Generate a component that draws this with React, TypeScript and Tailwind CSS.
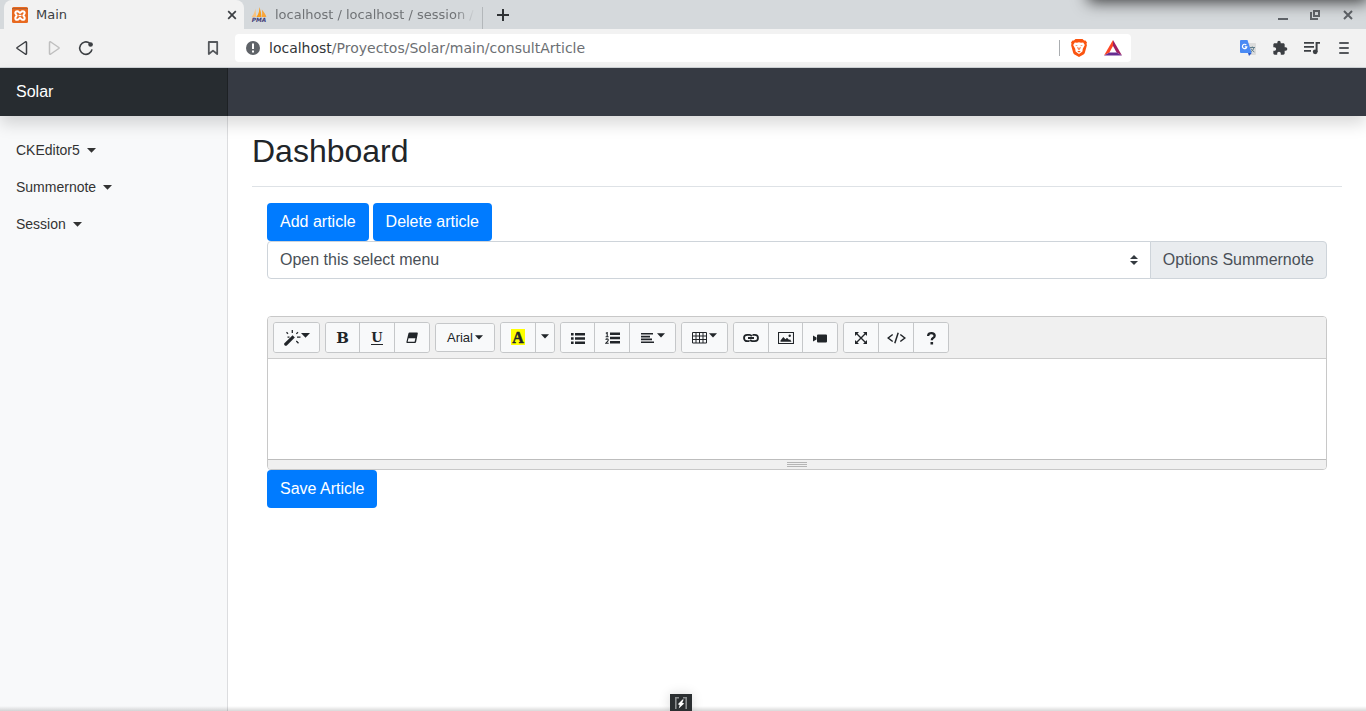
import React from "react";
import { MdExtension, MdQueueMusic } from "react-icons/md";

type KidsProps = { children: React.ReactNode };

function Caret({ className = "" }: { className?: string }) {
  return (
    <svg width="9" height="5" viewBox="0 0 9 5" fill="currentColor" aria-hidden="true" className={`shrink-0 ${className}`}>
      <path d="M0 0h9L4.500 4.800z" />
    </svg>
  );
}

/* ---------- browser window ---------- */

function PmaIcon() {
  return (
    <svg width="16" height="16" viewBox="0 0 16 16" aria-hidden="true">
      <path d="M0.5 10 C3 8 4 4 4.4 1.600 L5.200 10Z" fill="#f9c27c" />
      <path d="M5.400 10 C8 7 8.400 3 8.300 0 C9.600 3 10.400 7 10.400 10Z" fill="#f89c1c" />
      <path d="M10.800 10 C11.400 7 11.200 5 10.800 2.500 C13 5 15 8 15.400 10Z" fill="#f9a53a" />
      <text x="8" y="14.600" textAnchor="middle" fontSize="5.800" fontWeight="bold" fontStyle="italic" fill="#3f3e78" fontFamily="DejaVu Sans, sans-serif">
        PMA
      </text>
    </svg>
  );
}

function TabStrip() {
  return (
    <div className="flex h-[29px] items-stretch bg-[#d5d9dc] pl-1 font-['DejaVu_Sans',sans-serif] text-[13px]">
      <div className="flex w-60 items-center rounded-t-lg bg-[#f2f2f2] pl-2 pr-1 text-[#3c3f43]">
        <svg width="16" height="16" viewBox="0 0 16 16" aria-hidden="true">
          <rect width="16" height="16" rx="1.500" fill="#e8691f" />
          <path d="M0 1.500h16" stroke="#b9602f" strokeWidth="1" />
          <path
            d="M5.300 4.200c1.600 0 1.700 1.700 2.700 1.700s1.100-1.700 2.700-1.700c1.200 0 2 .8 2 1.900 0 1.200-1.400 1.500-1.400 2.400s1.400 1.200 1.400 2.400c0 1.100-.8 1.900-2 1.900-1.600 0-1.700-1.700-2.700-1.700s-1.100 1.700-2.700 1.700c-1.200 0-2-.8-2-1.900 0-1.200 1.400-1.500 1.400-2.400S3.300 7.300 3.300 6.100c0-1.100.8-1.900 2-1.900z"
            fill="none"
            stroke="#fff"
            strokeWidth="2"
          />
          <path d="M6.500 8.500h3" stroke="#fff" strokeWidth="1.400" />
        </svg>
        <span className="flex-1 pl-2">Main</span>
        <button type="button" aria-label="Close tab" className="flex size-4 items-center justify-center text-[#3c3f43]">
          <svg width="10" height="10" viewBox="0 0 10 10" stroke="currentColor" strokeWidth="1.700">
            <path d="M1.200 1.200l7.600 7.600M8.800 1.200L1.200 8.800" />
          </svg>
        </button>
      </div>
      <div className="flex w-[238px] items-center pl-[7px]">
        <PmaIcon />
        <span className="ml-2 w-[200px] overflow-hidden whitespace-nowrap text-[#707376] [mask-image:linear-gradient(to_right,black_90%,transparent)]">
          localhost / localhost / session /
        </span>
      </div>
      <div className="mt-[7px] w-px bg-[#b3b7ba]" />
      <button type="button" aria-label="New tab" className="ml-3 flex w-4 items-center justify-center pt-px text-[#2f3235]">
        <svg width="12" height="12" viewBox="0 0 12 12" fill="currentColor">
          <path d="M5 0h2v12H5zM0 5h12v2H0z" />
        </svg>
      </button>
      <div className="ml-auto flex items-center gap-4 pr-[10px] pt-px text-[#5f6368]">
        <button type="button" aria-label="Minimize" className="flex size-4 items-center">
          <svg width="10" height="10" viewBox="0 0 10 10" className="ml-[2px]">
            <path d="M0 8h10v2H0z" fill="currentColor" />
          </svg>
        </button>
        <button type="button" aria-label="Restore" className="flex size-4 items-center">
          <svg width="10" height="10" viewBox="0 0 10 10" fill="none" stroke="currentColor" strokeWidth="2" className="ml-[2px]">
            <path d="M4 1h5v5H4z" />
            <path d="M1 2v7h7" />
          </svg>
        </button>
        <button type="button" aria-label="Close window" className="flex size-4 items-center justify-center">
          <svg width="10" height="10" viewBox="0 0 10 10" stroke="currentColor" strokeWidth="2">
            <path d="M1 1l8 8M9 1L1 9" />
          </svg>
        </button>
      </div>
    </div>
  );
}

function ChromeButton({ label, className = "", children }: KidsProps & { label: string; className?: string }) {
  return (
    <button type="button" aria-label={label} className={`flex size-4 items-center justify-center ${className}`}>
      {children}
    </button>
  );
}

function AddressBar() {
  return (
    <div className="flex h-[39px] items-center border-b border-[#cfd3d6] bg-[#f2f2f2] text-[#3c3f43]">
      <div className="flex w-[235px] gap-4 px-[14px]">
        <ChromeButton label="Back">
          <svg width="16" height="16" viewBox="0 0 16 16" fill="none" stroke="currentColor" strokeWidth="1.500" strokeLinejoin="round">
            <path d="M3.200 8.500Q2.600 8 3.200 7.500L11.200 2q1.300-.6 1.300.8v10.400q0 1.400-1.300.8z" />
          </svg>
        </ChromeButton>
        <ChromeButton label="Forward" className="text-[#bfbfbf]">
          <svg width="16" height="16" viewBox="0 0 16 16" fill="none" stroke="currentColor" strokeWidth="1.500" strokeLinejoin="round">
            <path d="M12.800 8.500q.6-.5 0-1L4.800 2q-1.300-.6-1.300.8v10.400q0 1.400 1.300.8z" />
          </svg>
        </ChromeButton>
        <ChromeButton label="Reload">
          <svg width="16" height="16" viewBox="0 0 16 16" fill="none" stroke="currentColor" strokeWidth="1.600">
            <path d="M11.800 3.300A6.200 6.200 0 1 0 14 9.300" />
            <circle cx="12.600" cy="4.500" r="2.300" fill="currentColor" stroke="none" />
          </svg>
        </ChromeButton>
        <ChromeButton label="Bookmark" className="ml-auto">
          <svg width="16" height="16" viewBox="0 0 16 16" fill="none" stroke="#55585c" strokeWidth="1.800" strokeLinejoin="round">
            <path d="M3.800 2h8.400v12L8 10.600 3.800 14z" />
          </svg>
        </ChromeButton>
      </div>
      <div className="flex h-7 flex-1 items-center rounded bg-white pl-[11px] pr-[9px]">
        <svg width="14" height="14" viewBox="0 0 14 14" aria-hidden="true">
          <circle cx="7" cy="7" r="7" fill="#5f6368" />
          <path d="M6 2.500h2v5.500H6zM6 9.500h2v2H6z" fill="#fff" />
        </svg>
        <div className="flex-1 pl-[9px] font-['DejaVu_Sans',sans-serif] text-sm text-[#6c6f73]">
          <span className="text-[#333639]">localhost</span>/Proyectos/Solar/main/consultArticle
        </div>
        <span className="h-4 w-px bg-[#aaadb0]" />
        <button type="button" aria-label="Brave Shields" className="ml-[11px]">
          <svg width="16" height="18" viewBox="0 0 16 18">
            <path d="M4.500 0h7l1.600 1.500 1.400-.1 1.500 2-.5 1.300.4 1.500-2 7.300q-.4 1.300-1.400 2L8 18l-4.500-2.500q-1-.7-1.400-2L.1 6.200l.4-1.500L0 3.400l1.500-2 1.400.1z" fill="#fb5410" />
            <path d="M3.800 3.400l2.200.4 2-.5 2 .5 2.200-.4 1.600 2.600-2 3.800-.4 2.700-2 1.600L8 15l-1.400-.9-2-1.600-.4-2.700-2-3.800z" fill="#fff" />
            <path d="M4 6l2.500.4-.4.900zM12 6l-2.500.4.4.900zM6.400 8h.8l.2 1.300.6.4.6-.4.200-1.300h.8l-.4 2L8 11l-1.200-1zM6.200 12.400L8 11.700l1.800.7L8 13.500z" fill="#fb5410" />
          </svg>
        </button>
        <button type="button" aria-label="Brave Rewards" className="ml-[17px]">
          <svg width="18" height="16" viewBox="0 0 18 16">
            <path d="M9 0L0 15.500 5.400 12.500 9 6z" fill="#ff4724" />
            <path d="M9 0l9 15.500-5.400-3L9 6z" fill="#9e1f63" />
            <path d="M0 15.500h18l-5.400-3H5.400z" fill="#662d91" />
          </svg>
        </button>
      </div>
      <div className="flex w-[235px] justify-end gap-4 pr-[14px]">
        <ChromeButton label="Translate">
          <svg width="16" height="16" viewBox="0 0 16 16">
            <path d="M7 3h8q1 0 1 1v10q0 1-1 1h-5z" fill="#dcdcdc" />
            <path d="M1 0h6.500l4.200 13H1q-1 0-1-1V1q0-1 1-1z" fill="#4a8af4" />
            <path d="M8 13h3.700L9 16z" fill="#2a56c6" />
            <path d="M6.300 5A2.200 2.200 0 1 0 6.800 6.800H4.800" fill="none" stroke="#fff" strokeWidth="1.200" />
            <path d="M10 7.500h5M12.300 6.500v1M14 7.700q-.8 2.800-3 4M11 8.500q1 2.200 3.400 3.500" fill="none" stroke="#607d8b" strokeWidth="1" />
          </svg>
        </ChromeButton>
        <ChromeButton label="Extensions">
          <MdExtension size={16} className="shrink-0" />
        </ChromeButton>
        <ChromeButton label="Media">
          <svg width="16" height="14" viewBox="0 0 16 14" className="shrink-0">
            <path d="M0 1h10v1.800H0zM0 5h10v1.800H0zM0 9h7v1.800H0zM11.600 1H16v1.800h-2.400V11h-2z" fill="currentColor" />
            <circle cx="11.200" cy="10.800" r="2.400" fill="currentColor" />
          </svg>
        </ChromeButton>
        <ChromeButton label="Menu">
          <svg width="10" height="12" viewBox="0 0 10 12" stroke="#55585c" strokeWidth="2" strokeLinecap="round">
            <path d="M1 1h8M1 6h8M1 11h8" />
          </svg>
        </ChromeButton>
      </div>
    </div>
  );
}

/* ---------- page ---------- */

function SideLink({ children }: KidsProps) {
  return (
    <li>
      <a href="#" className="flex items-center px-4 py-2 text-sm leading-[21px] text-[#333]">
        {children}
        <Caret className="mb-px ml-[7px]" />
      </a>
    </li>
  );
}

function PrimaryButton({ children }: KidsProps) {
  return (
    <button type="button" className="h-[38px] rounded bg-[#007bff] px-[13px] text-base text-white">
      {children}
    </button>
  );
}

/* ---------- editor toolbar ---------- */

function Group({ children }: KidsProps) {
  return (
    <div className="flex divide-x divide-[#c5c7c9] overflow-hidden rounded-[3px] border border-[#c5c7c9]">{children}</div>
  );
}

function Tool({ label, className = "w-[34px]", children }: KidsProps & { label: string; className?: string }) {
  return (
    <button
      type="button"
      aria-label={label}
      className={`box-content flex h-[29px] items-center justify-center bg-[#f8f9fa] text-[#212529] ${className}`}
    >
      {children}
    </button>
  );
}

function Glyph({ w = 14, h = 12, children }: KidsProps & { w?: number; h?: number }) {
  return (
    <svg width={w} height={h} viewBox={`0 0 ${w} ${h}`} fill="currentColor" className="mt-px shrink-0" aria-hidden="true">
      {children}
    </svg>
  );
}

function EditorToolbar() {
  return (
    <div className="flex flex-wrap items-center gap-[5px] border-b border-[#cccccc] bg-[#f0f0f0] p-[5px]">
      <Group>
        <Tool label="Style" className="w-[45px]">
          <Glyph w={17} h={16}>
            <path d="M8.600 5.200l2.200 2.200-8 8q-1.200.8-2.200-.2t-.2-2z" />
            <path d="M8.300 0v3M2.500 2.200l1.500 1.500M14 2.200l-1.700 1.700M13 7.200h3.500M12.300 11l2.200 2.200M3.500 7.200h2" stroke="currentColor" strokeWidth="1.300" />
          </Glyph>
          <Caret className="mb-1" />
        </Tool>
      </Group>
      <Group>
        <Tool label="Bold" className="w-[33px]">
          <span className="pt-[2px] font-['DejaVu_Serif',serif] text-[15px] font-bold">B</span>
        </Tool>
        <Tool label="Underline">
          <span className="border-b-[1px] border-current pt-px font-['DejaVu_Serif',serif] text-[13px] font-bold leading-[13px]">U</span>
        </Tool>
        <Tool label="Remove font style">
          <Glyph w={12} h={12}>
            <path fillRule="evenodd" d="M3.600.500H11q1 0 .8 1l-1.700 8.500q-.2 1-1.200 1H1.200q-1 0-.8-1l2-8.500q.2-1 1.200-1zM2.500 6.300l-.8 3.500h6.900l.8-3.500z" />
          </Glyph>
        </Tool>
      </Group>
      <Group>
        <button type="button" className="flex h-[27px] w-[58px] items-center justify-center bg-[#f8f9fa] text-[13px] text-[#212529]">
          Arial
          <Caret className="mb-px ml-[2px] w-2" />
        </button>
      </Group>
      <Group>
        <Tool label="Recent color">
          <span className="mb-px h-4 bg-[#ffff00] px-px font-['Liberation_Serif',serif] text-base font-black leading-[18px] [-webkit-text-stroke:0.5px_currentColor]">A</span>
        </Tool>
        <Tool label="More color" className="w-[18px]">
          <Caret className="mb-[2px] w-2" />
        </Tool>
      </Group>
      <Group>
        <Tool label="Unordered list" className="w-[33px]">
          <Glyph w={14} h={11}>
            <path d="M0 0h2.600v2.400H0zM0 4.300h2.600v2.400H0zM0 8.600h2.600V11H0zM4 0h10v2.400H4zM4 4.300h10v2.400H4zM4 8.600h10V11H4z" />
          </Glyph>
        </Tool>
        <Tool label="Ordered list">
          <Glyph w={15} h={12}>
            <path d="M5 .5h10v2.400H5zM5 4.800h10v2.400H5zM5 9.100h10v2.400H5z" />
            <path d="M.8 1.400L2.200.5v4.200M.6 4.800h3M.7 7.800q.4-.9 1.400-.9 1.200 0 1.200 1.100 0 .9-2.400 3.200h2.800" fill="none" stroke="currentColor" strokeWidth="1.100" />
          </Glyph>
        </Tool>
        <Tool label="Paragraph" className="w-[45px]">
          <Glyph w={13} h={10}>
            <path d="M0 0h12v1.600H0zM0 2.800h9v1.600H0zM0 5.600h11v1.600H0zM0 8.400h13V10H0z" />
          </Glyph>
          <Caret className="mb-1 ml-[3px] w-2" />
        </Tool>
      </Group>
      <Group>
        <Tool label="Table" className="w-[45px]">
          <Glyph w={15} h={12}>
            <path d="M.5.500h14v10.500H.5zM.5 4h14M.5 7.500h14M4 .5V11M7.500.5V11M11 .5V11" fill="none" stroke="currentColor" strokeWidth="1" />
          </Glyph>
          <Caret className="mb-1 ml-[2px] w-2" />
        </Tool>
      </Group>
      <Group>
        <Tool label="Link">
          <Glyph w={16} h={10}>
            <path d="M6.500 8.200H4.200a3.200 3.200 0 0 1 0-6.400h2.300q1.500 0 2.300 1.400M9.500 1.800h2.300a3.200 3.200 0 0 1 0 6.400H9.500Q8 8.200 7.200 6.800M5 5h6" fill="none" stroke="currentColor" strokeWidth="1.800" />
          </Glyph>
        </Tool>
        <Tool label="Picture" className="w-[33px]">
          <Glyph w={16} h={12}>
            <path d="M.5.500h15v11H.5z" fill="none" stroke="currentColor" strokeWidth="1.100" />
            <path d="M2.500 9.800V8.500L5.300 5 7.500 7.300 9 5.800l2.200 2.300.8-.8 1.500 2.500z" />
            <circle cx="11.700" cy="3.700" r="1.200" />
          </Glyph>
        </Tool>
        <Tool label="Video">
          <Glyph w={14} h={9}>
            <path d="M5 .5h8q1 0 1 1v6q0 1-1 1H5q-1 0-1-1v-6q0-1 1-1zM0 1.500l3.500 2v2L0 7.500z" />
          </Glyph>
        </Tool>
      </Group>
      <Group>
        <Tool label="Full screen">
          <Glyph w={12} h={12}>
            <path d="M1 1l10 10M11 1L1 11" stroke="currentColor" strokeWidth="1.400" />
            <path d="M0 0h4L0 4zM12 0v4L8 0zM0 12V8l4 4zM12 12H8l4-4z" />
          </Glyph>
        </Tool>
        <Tool label="Code view">
          <Glyph w={19} h={12}>
            <path d="M5.700 2.500L1.200 6l4.500 3.500M13.300 2.500L17.800 6l-4.500 3.500M11.200.8L7.800 11.200" fill="none" stroke="currentColor" strokeWidth="1.500" />
          </Glyph>
        </Tool>
        <Tool label="Help">
          <Glyph w={9} h={13}>
            <path d="M1.200 4V3.300Q1.500 1.200 4.500 1.200T7.700 3.800Q7.700 5.200 6.100 6 4.800 6.700 4.800 8.300" fill="none" stroke="currentColor" strokeWidth="2.300" />
            <path d="M3.500 10h2.600v2.600H3.500z" />
          </Glyph>
        </Tool>
      </Group>
    </div>
  );
}

function Editor() {
  return (
    <div className="overflow-hidden rounded border border-[#c8c8c8] bg-white">
      <EditorToolbar />
      <div contentEditable suppressContentEditableWarning role="textbox" aria-label="Article body" className="h-[100px] p-[10px] outline-none" />
      <div className="flex h-[10px] flex-col items-center gap-px border-t border-[#bdbdbd] bg-[#f0f0f0] pt-[2px]">
        <span className="h-px w-5 bg-[#b5b5b5]" />
        <span className="h-px w-5 bg-[#b5b5b5]" />
        <span className="h-px w-5 bg-[#b5b5b5]" />
      </div>
    </div>
  );
}

export default function App() {
  return (
    <div className="relative flex min-h-screen flex-col overflow-hidden bg-white font-['Liberation_Sans',Arial,sans-serif] text-[#212529]">
      <TabStrip />
      <AddressBar />
      <nav className="relative z-10 flex h-12 bg-[#363a43] shadow-[0_8px_16px_rgba(0,0,0,0.15)]">
        <a href="#" className="flex w-[228px] items-center bg-[#272c30] px-4 text-base text-white shadow-[inset_-1px_0_0_#1d2124]">
          Solar
        </a>
      </nav>
      <div className="flex flex-1">
        <aside className="w-[228px] border-r border-[#dcdddf] bg-[#f8f9fa] pt-4">
          <ul>
            <SideLink>CKEditor5</SideLink>
            <SideLink>Summernote</SideLink>
            <SideLink>Session</SideLink>
          </ul>
        </aside>
        <main className="flex-1 px-6 pt-4">
          <h1 className="mb-4 border-b border-[#dee2e6] pb-4 text-[32px] leading-[38px]">Dashboard</h1>
          <div className="px-[15px]">
            <div className="flex gap-1">
              <PrimaryButton>Add article</PrimaryButton>
              <PrimaryButton>Delete article</PrimaryButton>
            </div>
            <div className="mb-[37px] flex h-[38px]">
              <div className="relative flex-1">
                <select
                  id="summernote-options"
                  className="h-full w-full appearance-none rounded-l border border-[#ced4da] bg-white px-3 text-base text-[#495057]"
                >
                  <option>Open this select menu</option>
                </select>
                <svg width="8" height="10" viewBox="0 0 4 5" className="pointer-events-none absolute right-[13px] top-[14px]" aria-hidden="true">
                  <path fill="#343a40" d="M2 0L0 2h4zm0 5L0 3h4z" />
                </svg>
              </div>
              <label
                htmlFor="summernote-options"
                className="-ml-px flex items-center rounded-r border border-[#ced4da] bg-[#e9ecef] px-3 text-base text-[#495057]"
              >
                Options Summernote
              </label>
            </div>
            <Editor />
            <PrimaryButton>Save Article</PrimaryButton>
          </div>
        </main>
      </div>

      <div className="pointer-events-none absolute -top-5 right-0 h-5 w-[276px] shadow-[0_0_16px_2px_rgba(0,0,0,0.75)]" />
      <div className="pointer-events-none absolute inset-x-0 bottom-0 h-[5px] bg-linear-to-b from-transparent to-black/15" />
      <div className="absolute bottom-0 left-[670px] flex h-[17px] w-[22px] items-center justify-center bg-[#2b2f31] shadow-[0_0_12px_rgba(0,0,0,0.15)]">
        <svg width="12" height="12" viewBox="0 0 12 12" aria-hidden="true">
          <path d="M4 .8H.8V12M8 .8h3.200V12" fill="none" stroke="#8c8f90" strokeWidth="1.600" />
          <path d="M7.500 2.500L2.800 7.300l1.900.7-1 3.500L9.200 6.500l-2-.8 1.500-3.200z" fill="#fff" />
        </svg>
      </div>
    </div>
  );
}
